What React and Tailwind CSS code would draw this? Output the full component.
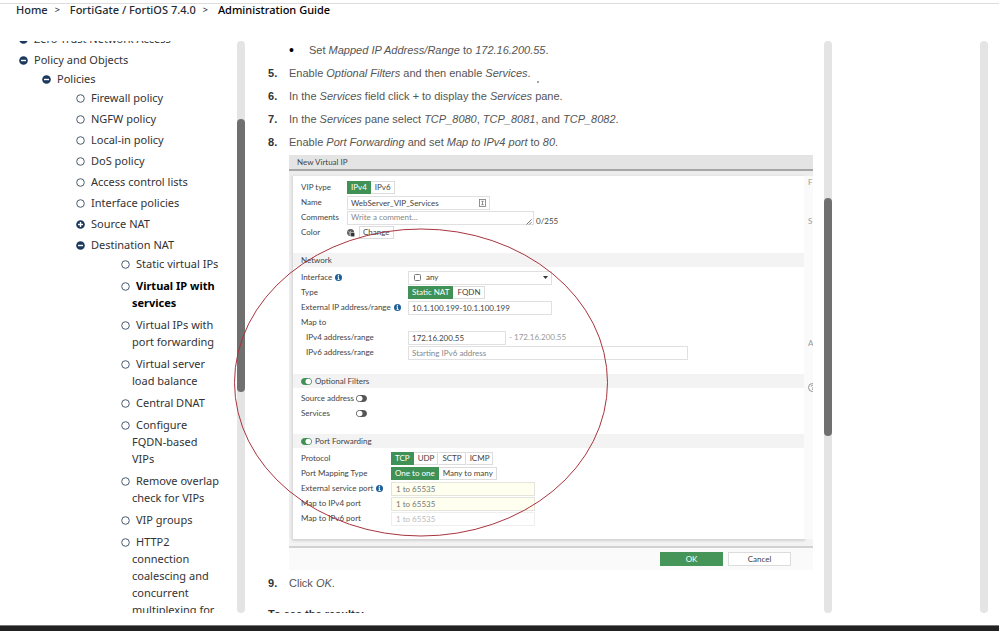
import { useState } from "react";
import clsx from "clsx";

const TREE = [
  { label: "Zero Trust Network Access", icon: "minus" },
  {
    label: "Policy and Objects",
    icon: "minus",
    indent: "pl-[23px]",
    children: [
      {
        label: "Policies",
        icon: "minus",
        indent: "pl-[34px]",
        children: [
          { label: "Firewall policy" },
          { label: "NGFW policy" },
          { label: "Local-in policy" },
          { label: "DoS policy" },
          { label: "Access control lists" },
          { label: "Interface policies" },
          { label: "Source NAT", icon: "plus" },
          {
            label: "Destination NAT",
            icon: "minus",
            indent: "pl-[45px]",
            gap: "gap-[5px]",
            children: [
              { label: "Static virtual IPs" },
              { label: "Virtual IP with services", active: true },
              { label: "Virtual IPs with port forwarding" },
              { label: "Virtual server load balance" },
              { label: "Central DNAT" },
              { label: "Configure FQDN-based VIPs" },
              { label: "Remove overlap check for VIPs" },
              { label: "VIP groups" },
              { label: "HTTP2 connection coalescing and concurrent multiplexing for" },
            ],
          },
        ],
      },
    ],
  },
];

function NodeIcon({ type }) {
  return (
    <svg className="inline-block w-[9px] h-[9px] mr-1.5 align-[-1px]" viewBox="0 0 9 9">
      {type ? (
        <>
          <circle cx="4.5" cy="4.5" r="4.3" fill="#1c3a5e" />
          <path d="M2 4.5h5" stroke="#fff" strokeWidth="1.4" />
          {type === "plus" && <path d="M4.5 2v5" stroke="#fff" strokeWidth="1.4" />}
        </>
      ) : (
        <circle cx="4.5" cy="4.5" r="3.8" fill="#fff" stroke="#4a5a70" strokeWidth="1" />
      )}
    </svg>
  );
}

function Tree({ nodes, gap = "gap-1" }) {
  return (
    <ul className={clsx("flex flex-col", gap)}>
      {nodes.map((node) => (
        <li key={node.label}>
          <a
            href="#"
            className={clsx("block pl-[11px] -indent-[11px]", node.active ? "font-bold text-black" : "text-[#333]")}
          >
            <NodeIcon type={node.icon} />
            {node.label}
          </a>
          {node.children && (
            <div className={clsx("mt-0.5", node.indent)}>
              <Tree nodes={node.children} gap={node.gap} />
            </div>
          )}
        </li>
      ))}
    </ul>
  );
}

function ScrollTrack({ start = 0, size = 0 }) {
  return (
    <div className="flex flex-col w-2 shrink-0 rounded-full bg-[#e4e4e4]">
      <div style={{ flexGrow: start }} />
      <div className="rounded-full bg-[#707070]" style={{ flexGrow: size }} />
      <div style={{ flexGrow: 100 - start - size }} />
    </div>
  );
}

function Step({ n, children }) {
  return (
    <li className="flex">
      <span className="w-[21px] shrink-0 font-bold text-[#333]">{n}.</span>
      <p>{children}</p>
    </li>
  );
}

function InfoIcon() {
  return (
    <svg className="w-[7px] h-[7px] ml-[3px] shrink-0" viewBox="0 0 8 8">
      <circle cx="4" cy="4" r="4" fill="#1f5f99" />
      <path d="M2.8 3.5h1.6M4 3.2v3M2.8 6.2h2.6" stroke="#fff" strokeWidth="1" fill="none" />
      <circle cx="4" cy="1.7" r="0.8" fill="#fff" />
    </svg>
  );
}

function Switch({ label, initial = false }) {
  const [on, setOn] = useState(initial);
  return (
    <button role="switch" aria-checked={on} aria-label={label} onClick={() => setOn(!on)}>
      <svg className="block w-[11px] h-[7px]" viewBox="0 0 11 7">
        <rect x="0.5" y="0.5" width="10" height="6" rx="3" fill={on ? "#3f9156" : "#555"} stroke={on ? "#3f9156" : "#555"} />
        <circle cx={on ? 7.3 : 3.7} cy="3.5" r="2.8" fill="#fff" />
      </svg>
    </button>
  );
}

function Segments({ options, label }) {
  const [selected, setSelected] = useState(options[0]);
  return (
    <div role="group" aria-label={label} className="flex">
      {options.map((option) => (
        <button
          key={option}
          onClick={() => setSelected(option)}
          className={clsx(
            "h-[13px] px-[3px] border leading-[11px]",
            option === selected ? "bg-[#3f9156] border-[#3f9156] text-white" : "bg-white border-[#dcdcdc] border-l-transparent"
          )}
        >
          {option}
        </button>
      ))}
    </div>
  );
}

function Row({ label, htmlFor, width, info, indent, children }) {
  return (
    <div className="flex items-center h-[15px] pl-2">
      <label htmlFor={htmlFor} className={clsx("flex items-center shrink-0 whitespace-nowrap", width, indent && "pl-[5px]")}>
        {label}
        {info && <InfoIcon />}
      </label>
      {children}
    </div>
  );
}

function Section({ children }) {
  return <div className="flex items-center h-[14px] pl-2 mb-[3px] bg-[#f3f3f3]">{children}</div>;
}

const field = "h-[14px] px-[3px] border border-[#e0e0e0] bg-white text-[#444] placeholder:text-[#888]";
const portField = "w-[144px] h-[14px] px-1 border border-[#e4e4dc] bg-[#fffff0] placeholder:text-[#777]";

function VirtualIpForm() {
  return (
    <div className="font-['Lato',sans-serif] text-[8px] leading-[11px] text-[#444] bg-[#fafafa]">
      <div className="h-[16px] pl-2 border-b-2 border-[#a6a6a6] bg-[#e4e4e4] leading-[15px]">New Virtual IP</div>
      <div className="flex pl-1 pt-[5px] bg-[#ededed]">
        <form className="flex-1 min-w-0 pt-1 pb-[13px] bg-white shadow-[0_1px_2px_1px_#d4d4d4]" onSubmit={(e) => e.preventDefault()}>
          <Row label="VIP type" width="w-[46px]">
            <Segments label="VIP type" options={["IPv4", "IPv6"]} />
          </Row>
          <Row label="Name" htmlFor="name" width="w-[46px]">
            <div className="relative flex items-center">
              <input id="name" className={clsx(field, "w-[143px]")} defaultValue="WebServer_VIP_Services" />
              <svg className="absolute right-1 w-[7px] h-[8px]" viewBox="0 0 7 8" fill="none" stroke="#777" strokeWidth="0.8">
                <rect x="0.5" y="0.5" width="6" height="7" />
                <path d="M2.3 2.3h2.4M2.3 5.7h2.4M3.5 2.3v3.4" />
              </svg>
            </div>
          </Row>
          <Row label="Comments" htmlFor="comments" width="w-[46px]">
            <div className="relative flex">
              <textarea
                id="comments"
                rows={1}
                placeholder="Write a comment..."
                className={clsx(field, "w-[187px] resize-none overflow-hidden")}
              />
              <svg className="absolute right-0.5 bottom-0 w-[6px] h-[6px]" viewBox="0 0 6 6" stroke="#666" strokeWidth="0.9">
                <path d="M0.5 5.5l5-5M3.2 5.5l2.3-2.3" />
              </svg>
            </div>
            <span className="pt-2 pl-0.5">0/255</span>
          </Row>
          <Row label="Color" width="w-[46px]">
            <svg className="w-[8px] h-[8px]" viewBox="0 0 8 8">
              <circle cx="3.6" cy="3.6" r="3.5" fill="#555" />
              <path d="M1 2.5l2 1 1-2M2 6l1-2" stroke="#ddd" strokeWidth="0.7" fill="none" />
              <rect x="3.8" y="3.6" width="4" height="4.2" fill="#333" stroke="#fff" strokeWidth="0.5" />
            </svg>
            <button className="h-[13px] px-[3px] ml-1 border border-[#dcdcdc] bg-white leading-[11px]">Change</button>
          </Row>

          <div className="pt-[13px]">
            <Section>Network</Section>
            <Row label="Interface" htmlFor="interface" info width="w-[107px]">
              <div className="relative flex items-center">
                <select id="interface" className={clsx(field, "w-[144px] pl-[17px] appearance-none")}>
                  <option>any</option>
                </select>
                <svg className="absolute left-1.5 w-[7px] h-[7px]" viewBox="0 0 7 7">
                  <rect x="0.5" y="0.5" width="6" height="6" rx="1" fill="none" stroke="#777" />
                </svg>
                <svg className="absolute right-1 w-[5px] h-[3px]" viewBox="0 0 5 3">
                  <path d="M0 0h5l-2.5 3z" fill="#333" />
                </svg>
              </div>
            </Row>
            <Row label="Type" width="w-[107px]">
              <Segments label="Type" options={["Static NAT", "FQDN"]} />
            </Row>
            <Row label="External IP address/range" htmlFor="external" info width="w-[107px]">
              <input id="external" className={clsx(field, "w-[144px]")} defaultValue="10.1.100.199-10.1.100.199" />
            </Row>
            <Row label="Map to" width="w-[107px]" />
            <Row label="IPv4 address/range" htmlFor="ipv4" indent width="w-[107px]">
              <input id="ipv4" className={clsx(field, "w-[98px]")} defaultValue="172.16.200.55" />
              <span className="pl-[3px] text-[#999]">- 172.16.200.55</span>
            </Row>
            <Row label="IPv6 address/range" htmlFor="ipv6" indent width="w-[107px]">
              <input id="ipv6" className={clsx(field, "w-[280px]")} placeholder="Starting IPv6 address" />
            </Row>
          </div>

          <div className="pt-[14px]">
            <Section>
              <Switch label="Optional Filters" initial />
              <span className="pl-[3px]">Optional Filters</span>
            </Section>
            <Row label="Source address" width="w-[55px]">
              <Switch label="Source address" />
            </Row>
            <Row label="Services" width="w-[55px]">
              <Switch label="Services" />
            </Row>
          </div>

          <div className="pt-[13px]">
            <Section>
              <Switch label="Port Forwarding" initial />
              <span className="pl-[3px]">Port Forwarding</span>
            </Section>
            <Row label="Protocol" width="w-[90px]">
              <Segments label="Protocol" options={["TCP", "UDP", "SCTP", "ICMP"]} />
            </Row>
            <Row label="Port Mapping Type" width="w-[90px]">
              <Segments label="Port Mapping Type" options={["One to one", "Many to many"]} />
            </Row>
            <Row label="External service port" htmlFor="port" info width="w-[90px]">
              <input id="port" className={portField} placeholder="1 to 65535" />
            </Row>
            <Row label="Map to IPv4 port" htmlFor="port4" width="w-[90px]">
              <input id="port4" className={portField} placeholder="1 to 65535" />
            </Row>
            <Row label="Map to IPv6 port" htmlFor="port6" width="w-[90px]">
              <input
                id="port6"
                disabled
                className="w-[144px] h-[14px] px-1 border border-[#eee] bg-white placeholder:text-[#bbb]"
                placeholder="1 to 65535"
              />
            </Row>
          </div>
        </form>

        {/* Side column, cut off by the edge of the dialog */}
        <div className="flex flex-col w-[9px] shrink-0 pl-1 overflow-hidden bg-[#fafafa] text-[#999]">
          <span className="pt-px">F</span>
          <span className="pt-7">S</span>
          <span className="pt-[111px]">A</span>
          <svg className="w-[9px] h-[9px] mt-[34px] shrink-0" viewBox="0 0 9 9" fill="none" stroke="#888" strokeWidth="0.9">
            <circle cx="4.5" cy="4.5" r="4" />
            <path d="M3.2 3.5c0-1.6 2.6-1.6 2.6 0 0 .9-1.3.9-1.3 2M4.5 6.2v.8" />
          </svg>
        </div>
      </div>
      <div className="h-[9px] border-b-2 border-[#d2d2d2] bg-[#f3f3f3]" />
      <div className="flex justify-end gap-[5px] pt-1 pb-1 pr-[22px]">
        <button className="w-[63px] h-[14px] bg-[#459558] text-white">OK</button>
        <button className="w-[63px] h-[14px] border border-[#dcdcdc] bg-white leading-[11px]">Cancel</button>
      </div>
    </div>
  );
}

export default function App() {
  return (
    <div className="flex flex-col h-screen bg-white overflow-hidden">
      <header className="mt-[3px] h-[38px] shrink-0 border-t border-[#ddd]">
        <nav className="flex items-center pl-4 font-['Noto_Sans',sans-serif] text-[11px] leading-[11px] font-medium text-[#222b35]">
          <a href="#">Home</a>
          <span className="px-[7px] text-[9px]">&gt;</span>
          <a href="#" className="pl-[3px]">FortiGate / FortiOS 7.4.0</a>
          <span className="px-[7px] text-[9px]">&gt;</span>
          <a href="#" className="pl-[3px] text-black">Administration Guide</a>
        </nav>
      </header>

      <main className="relative flex flex-1 min-h-0">
        <aside className="flex w-[245px] shrink-0">
          <div className="flex-1 min-w-0 pl-[19px] pr-4 overflow-hidden font-['Noto_Sans',sans-serif] text-[11px] leading-[17px]">
            <div className="-mt-[11px]">
              <Tree nodes={TREE} />
            </div>
          </div>
          <ScrollTrack start={13.6} size={47.7} />
        </aside>

        <article className="flex flex-1 min-w-0">
          <div className="flex-1 min-w-0 pl-[23px] pr-[11px] overflow-hidden font-['Liberation_Sans',Arial,sans-serif] text-[11px] leading-[15px] text-[#555]">
            <ol className="flex flex-col gap-2 pt-0.5">
              <li className="pl-[21px]">
                <ul>
                  <li className="flex">
                    <span className="w-5 text-[14px] text-black">•</span>
                    <p>Set <em>Mapped IP Address/Range</em> to <em>172.16.200.55</em>.</p>
                  </li>
                </ul>
              </li>
              <Step n={5}>Enable <em>Optional Filters</em> and then enable <em>Services</em>.</Step>
              <Step n={6}>In the <em>Services</em> field click <em>+</em> to display the <em>Services</em> pane.</Step>
              <Step n={7}>In the <em>Services</em> pane select <em>TCP_8080</em>, <em>TCP_8081</em>, and <em>TCP_8082</em>.</Step>
              <Step n={8}>Enable <em>Port Forwarding</em> and set <em>Map to IPv4 port</em> to <em>80</em>.</Step>
              <li className="pl-[21px] -mt-[3px] -mb-0.5">
                <VirtualIpForm />
              </li>
              <Step n={9}>Click <em>OK</em>.</Step>
            </ol>
            <h4 className="pt-4 font-bold text-[#333]">To see the results:</h4>
          </div>
          <ScrollTrack start={27.4} size={41.6} />
        </article>

        <aside className="flex justify-end w-[167px] shrink-0 pr-[11px]">
          <ScrollTrack />
        </aside>

        {/* Hand-drawn highlight and stray pen dot over the article */}
        <svg className="absolute left-[233px] top-[37px] w-[376px] h-[459px] pointer-events-none" viewBox="0 0 376 459">
          <ellipse cx="188" cy="304.5" rx="186.5" ry="153.5" fill="none" stroke="#a8343e" strokeWidth="1" />
          <circle cx="305" cy="4" r="0.8" fill="#333" />
        </svg>
      </main>

      <footer className="mt-3 h-[6px] shrink-0 border-t border-[#777] bg-[#222]" />
    </div>
  );
}
